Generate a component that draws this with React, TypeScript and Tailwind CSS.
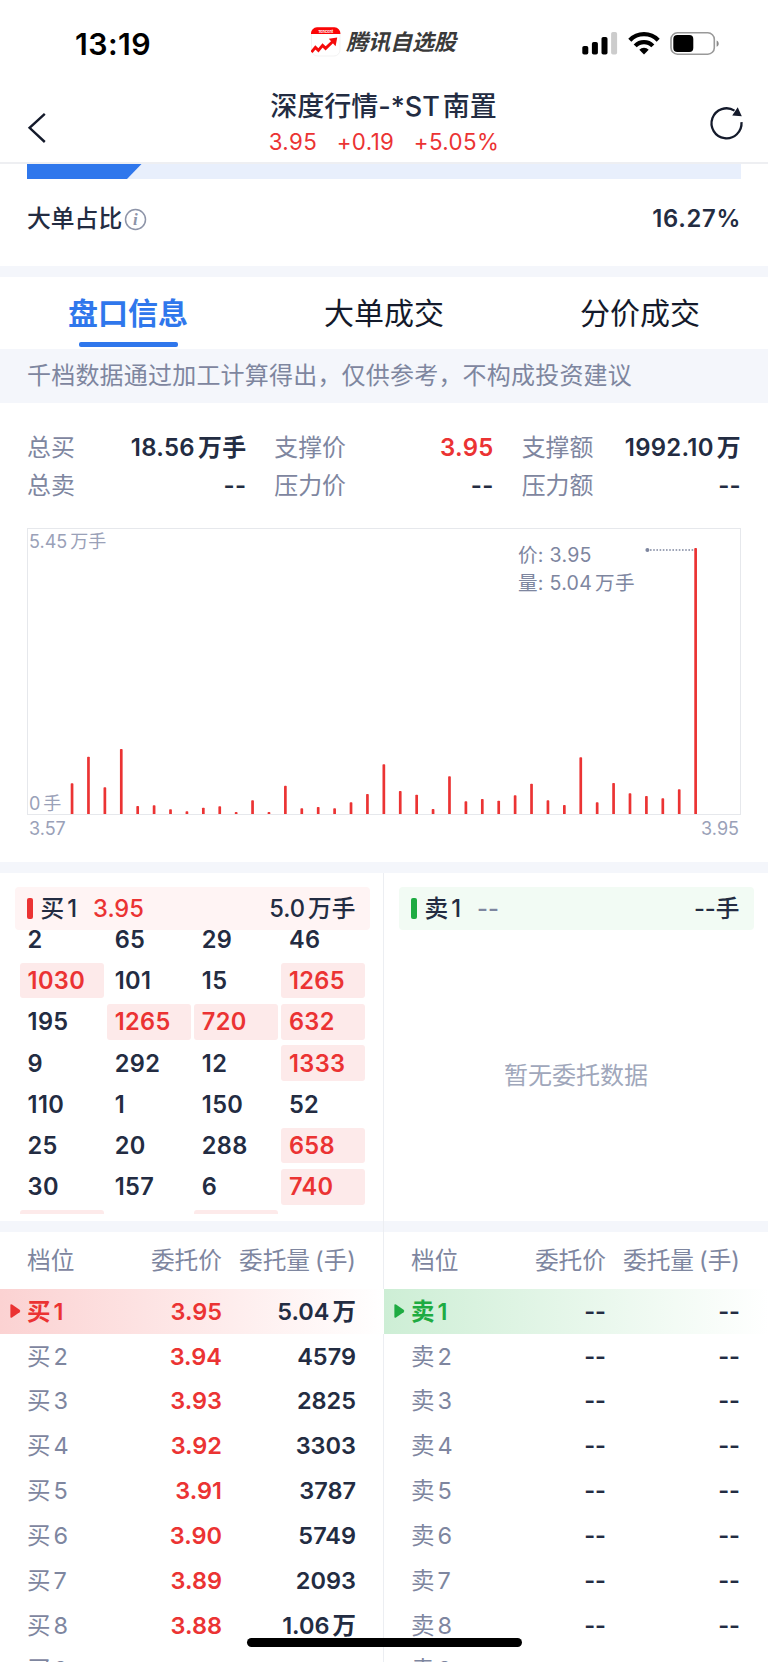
import clsx from "clsx";

type Cell = { value: number | null; big?: boolean };

type LevelRow = {
  level: number;
  price: string;
  volume: string;
};

const TABS = ["盘口信息", "大单成交", "分价成交"];

const STATS = [
  { label: "总买", value: "18.56万手" },
  { label: "支撑价", value: "3.95", up: true },
  { label: "支撑额", value: "1992.10万" },
  { label: "总卖", value: "--" },
  { label: "压力价", value: "--" },
  { label: "压力额", value: "--" },
];

// bar heights in px, one per price step from 3.57 to 3.95
const BARS = [
  30.7, 57.3, 26.7, 65, 8, 8.7, 4.7, 2.7, 6.3, 7.7, 2, 13.7, 2, 28.3, 5.7, 7, 5.7, 11.7, 20, 49.7,
  23, 19.3, 5, 37.7, 12.7, 15, 13.3, 18.7, 30.3, 13.7, 9, 56.7, 11.7, 31, 20.7, 18, 15.7, 24.7, 266,
];

const QUEUE: number[][] = [
  [2, 65, 29, 46],
  [1030, 101, 15, 1265],
  [195, 1265, 720, 632],
  [9, 292, 12, 1333],
  [110, 1, 150, 52],
  [25, 20, 288, 658],
  [30, 157, 6, 740],
];

const CELLS: Cell[] = [
  ...QUEUE.flat().map((value) => ({ value, big: value > 500 })),
  { value: null, big: true },
  { value: null },
  { value: null, big: true },
  { value: null },
];

const BUYS: LevelRow[] = [
  { level: 1, price: "3.95", volume: "5.04万" },
  { level: 2, price: "3.94", volume: "4579" },
  { level: 3, price: "3.93", volume: "2825" },
  { level: 4, price: "3.92", volume: "3303" },
  { level: 5, price: "3.91", volume: "3787" },
  { level: 6, price: "3.90", volume: "5749" },
  { level: 7, price: "3.89", volume: "2093" },
  { level: 8, price: "3.88", volume: "1.06万" },
  { level: 9, price: "", volume: "" },
];

const SELLS: LevelRow[] = BUYS.map(({ level }) => ({
  level,
  price: level < 9 ? "--" : "",
  volume: level < 9 ? "--" : "",
}));

// puts a hair of space wherever a CJK character meets a letter or digit
function Mixed({ text }: { text: string }) {
  const parts = text.split(/(?<=[\u4e00-\u9fff])(?=[\dA-Z])|(?<=[\dA-Z])(?=[\u4e00-\u9fff])/);
  return (
    <span className="inline-flex items-baseline gap-[3px] whitespace-pre">
      {parts.map((p, i) => (
        <span key={i}>{p}</span>
      ))}
    </span>
  );
}

function StatusBar() {
  return (
    <div className="flex h-[85px] items-start pt-[26px]">
      <div className="w-[311px] pl-[75px] text-[30.3px] leading-[36px] font-semibold tracking-[0.4px] text-black">13:19</div>
      <svg className="mt-px h-[30px] w-[30px]" viewBox="0 0 30 30">
        <rect x="0.5" y="0.5" width="28.5" height="28.5" rx="6" fill="#fff" stroke="#f3f3f3" />
        <path d="M0 7V6.5A6 6 0 0 1 6 0.3H23.4A6 6 0 0 1 29.4 6.5V7Z" fill="#fb0505" />
        <text x="14.7" y="5.6" fontSize="3.8" fontWeight="700" fill="#fff" textAnchor="middle">Tencent</text>
        <path d="M0.5 25.2L4.4 20.4L7.4 23.4L11.6 18.4L14.6 21.4L22.3 14" fill="none" stroke="#f50a0a" strokeWidth="2.9" />
        <path d="M17.8 11.8L26.2 10.4L24.6 19.2Z" fill="#f50a0a" />
      </svg>
      <span className="mt-px ml-[5px] text-[22px] leading-[30px] font-bold text-[#3a3a3a] italic">腾讯自选股</span>
      <div className="mt-[5px] ml-auto flex items-center pr-[48.5px]">
        <svg width="36" height="24" viewBox="0 0 36 24">
          <rect x="0.3" y="15" width="6" height="8.6" rx="1.8" />
          <rect x="9.9" y="11" width="6" height="12.6" rx="1.8" />
          <rect x="19.5" y="6" width="6" height="17.6" rx="1.8" />
          <rect x="29.1" y="1" width="6" height="22.6" rx="1.8" fill="#ccc" />
        </svg>
        <svg className="ml-[10px]" width="32" height="24" viewBox="0 0 32 24">
          <g fill="none" stroke="#000" strokeWidth="4.2">
            <path d="M1.8 9.3A19.6 19.6 0 0 1 30.2 9.3" />
            <path d="M7.2 14.9A12.2 12.2 0 0 1 24.8 14.9" />
          </g>
          <path d="M16 23.4L11.3 18.7A6.6 6.6 0 0 1 20.7 18.7Z" />
        </svg>
        <svg className="ml-[10px]" width="50" height="24" viewBox="0 0 50 24">
          <rect x="1" y="1.8" width="43.3" height="21.4" rx="6.5" fill="none" stroke="#999" strokeWidth="1.6" />
          <rect x="3.3" y="4" width="20" height="17" rx="4" />
          <path d="M46.6 9.4C49.4 10.6 49.4 14.6 46.6 15.8Z" fill="#888" />
        </svg>
      </div>
    </div>
  );
}

function TitleBar() {
  return (
    <div className="flex h-[79px] justify-between border-b-2 border-[#eeeff2]">
      <svg className="mt-[27px] ml-[27px]" width="20" height="32" viewBox="0 0 20 32" fill="none" stroke="#141a2b" strokeWidth="2.4">
        <path d="M17.8 1.8L2.6 15.8L17.8 30" />
      </svg>
      <div className="flex flex-col items-center pl-[12px]">
        <h1 className="mt-[4px] text-[27px] leading-[36px] font-medium text-[#232c42]">
          <Mixed text="深度行情-*ST南置" />
        </h1>
        <p className="mt-[3px] flex gap-[19.5px] pl-px text-[22.3px] leading-[28px] tracking-[0.4px] text-[#eb3333]">
          <span>3.95</span>
          <span>+0.19</span>
          <span>+5.05%</span>
        </p>
      </div>
      <svg className="mt-[20px] mr-[24px]" width="36" height="38" viewBox="0 0 36 38">
        <path d="M33.5 17.2A15 15 0 1 1 26.5 5.6" fill="none" stroke="#141a2b" strokeWidth="2.3" />
        <path d="M29.7 2.2L33.8 11.2L24.2 10.4Z" fill="#141a2b" />
      </svg>
    </div>
  );
}

function Chart() {
  return (
    <div className="mx-[27px] mt-[23px] h-[334px]">
      <div className="relative h-[287px] border border-[#e6e8ec]">
        <span className="absolute top-px left-px text-[18px] leading-[24px] text-[#9aa1b8]">
          <Mixed text="5.45万手" />
        </span>
        <span className="absolute -bottom-[2px] left-px text-[18px] leading-[24px] text-[#9aa1b8]">
          <Mixed text="0手" />
        </span>
        <div className="absolute top-[12px] left-[490px] text-[19.6px] leading-[28px] tracking-[0.25px] text-[#7e869f]">
          <p>价: 3.95</p>
          <p><Mixed text="量: 5.04万手" /></p>
        </div>
        <svg className="h-full w-full" viewBox="0 0 712 285">
          <circle cx="619.4" cy="21" r="2" fill="#7e869f" />
          <path d="M622 21H667" stroke="#7e869f" strokeWidth="1.4" strokeDasharray="1.6 1.6" />
          {BARS.map((h, i) => (
            <rect key={i} x={42.7 + i * 16.41} y={285 - h} width="2.7" height={h + 0.5} rx="0.8" fill="#eb3333" />
          ))}
        </svg>
      </div>
      <div className="flex justify-between px-[2px] pt-[2px] text-[18px] leading-[24px] text-[#9aa1b8]">
        <span>3.57</span>
        <span>3.95</span>
      </div>
    </div>
  );
}

function QueueHeader({ side, price, volume }: { side: "buy" | "sell"; price: string; volume: string }) {
  const buy = side === "buy";
  return (
    <div
      className={clsx(
        "mx-[14.5px] flex h-[43px] shrink-0 items-center rounded pr-[14px] pl-[12.5px] text-[23.7px] font-medium text-[#232c42]",
        buy ? "bg-[#fff4f4]" : "bg-[#f2fbf4]"
      )}
    >
      <span className={clsx("mr-[8px] h-[21px] w-[5.5px] rounded-[2px]", buy ? "bg-[#eb3333]" : "bg-[#1eab42]")} />
      <Mixed text={buy ? "买1" : "卖1"} />
      <span className={clsx("ml-[16px]", buy ? "text-[#eb3333]" : "text-[#7e869f]")}>{price}</span>
      <span className="ml-auto"><Mixed text={volume} /></span>
    </div>
  );
}

function LevelTable({ side, rows }: { side: "buy" | "sell"; rows: LevelRow[] }) {
  const buy = side === "buy";
  return (
    <div className="w-1/2">
      <div className="flex h-[57.5px] items-center pt-[2px] pr-[28px] pl-[27px] text-[23.7px] text-[#7e869f]">
        <span className="w-[85px]">档位</span>
        <span className="w-[110px] text-right">委托价</span>
        <span className="flex flex-1 justify-end gap-[5px]"><span>委托量</span><span>(手)</span></span>
      </div>
      {rows.map((row) => {
        const first = row.level === 1;
        return (
          <div
            key={row.level}
            className={clsx(
              "relative flex h-[44.83px] items-center pr-[28px] pl-[27px] text-[23.5px] font-semibold text-[#232c42]",
              first && buy && "bg-linear-to-r from-[#fbd2d2] to-white",
              first && !buy && "bg-linear-to-r from-[#cdeed5] to-white"
            )}
          >
            {first && (
              <svg className="absolute left-[10px]" width="11" height="14" viewBox="0 0 11 14" fill={buy ? "#eb3333" : "#1eab42"}>
                <path d="M0.4 0.8Q0.6 0 2 0.6L9.6 5.8Q11 7 9.6 8.2L2 13.4Q0.6 14 0.4 13.2Z" />
              </svg>
            )}
            <span
              className={clsx(
                "w-[85px]",
                first ? "font-semibold" : "font-normal text-[#7e869f]",
                first && (buy ? "text-[#eb3333]" : "text-[#1eab42]")
              )}
            >
              <Mixed text={`${buy ? "买" : "卖"}${row.level}`} />
            </span>
            <span className={clsx("w-[110px] text-right", buy && "text-[#eb3333]")}>{row.price}</span>
            <span className="flex-1 text-right"><Mixed text={row.volume} /></span>
          </div>
        );
      })}
    </div>
  );
}

export default function App() {
  return (
    <div className="relative h-[1662px] w-[768px] overflow-hidden bg-white font-['Inter','Noto_Sans_CJK_SC',sans-serif]">
      <StatusBar />
      <TitleBar />

      <section className="h-[102px] px-[27px]">
        <div className="h-[15px] bg-[#e8effc]">
          <div className="h-full w-[114.5px] bg-[#2f77ec] [clip-path:polygon(0_0,100%_0,100px_100%,0_100%)]" />
        </div>
        <div className="mt-[22px] flex h-[36px] items-center text-[23.8px] font-medium text-[#232c42]">
          <span>大单占比</span>
          <svg className="ml-[2px]" width="23" height="23" viewBox="0 0 23 23">
            <circle cx="11.5" cy="11.5" r="10" fill="none" stroke="#8d94a8" strokeWidth="1.5" />
            <text x="11.3" y="17.2" fontSize="17" fontStyle="italic" fontWeight="700" fontFamily="Liberation Serif" fill="#8d94a8" textAnchor="middle">i</text>
          </svg>
          <span className="ml-auto font-semibold tracking-[0.7px]">16.27%</span>
        </div>
      </section>
      <div className="h-[11px] bg-[#f4f6fb]" />

      <nav className="flex h-[72px]">
        {TABS.map((tab, i) => (
          <button
            key={tab}
            className={clsx(
              "relative flex flex-1 justify-center pt-[14px] text-[30px] leading-[44px]",
              i === 0 ? "font-semibold text-[#2f77ec]" : "text-[#141a2b]"
            )}
          >
            {tab}
            {i === 0 && <span className="absolute bottom-[2px] h-[5.5px] w-[99px] rounded-[2px] bg-[#2f77ec]" />}
          </button>
        ))}
      </nav>
      <p className="flex h-[54px] items-center bg-[#f4f6fb] px-[27px] text-[24px] tracking-[0.2px] text-[#7e869f]">
        千档数据通过加工计算得出，仅供参考，不构成投资建议
      </p>

      <div className="mt-[26px] grid grid-cols-3 gap-x-[28px] px-[27px]">
        {STATS.map((s) => (
          <div key={s.label} className="flex h-[38px] items-center justify-between text-[23.9px]">
            <span className="text-[#7e869f]">{s.label}</span>
            <span className={clsx("font-semibold tracking-[0.3px]", s.up ? "text-[#eb3333]" : "text-[#232c42]")}>
              <Mixed text={s.value} />
            </span>
          </div>
        ))}
      </div>

      <Chart />

      <div className="h-[11px] bg-[#f4f6fb]" />
      <div className="flex h-[348px]">
        <div className="flex w-1/2 flex-col pt-[14px]">
          <QueueHeader side="buy" price="3.95" volume="5.0万手" />
          <div className="-mt-[8.5px] h-[292px] shrink-0 overflow-hidden pl-[20px]">
            <div className="grid w-[345px] grid-cols-4 gap-x-[3.5px] gap-y-[5.75px]">
              {CELLS.map((c, i) => (
                <div
                  key={i}
                  className={clsx(
                    "flex h-[35.5px] items-center rounded-[3px] pt-px pl-[7.5px] text-[23.6px] leading-[28px] font-semibold tracking-[0.4px]",
                    c.big ? "bg-[#fdeaea] text-[#eb3333]" : "text-[#232c42]"
                  )}
                >
                  {c.value}
                </div>
              ))}
            </div>
          </div>
        </div>
        <div className="-ml-px w-px bg-[#eceef2]" />
        <div className="flex w-1/2 flex-col pt-[14px]">
          <QueueHeader side="sell" price="--" volume="--手" />
          <div className="flex h-[292px] items-center justify-center text-[24px] text-[#a0a7bb]">暂无委托数据</div>
        </div>
      </div>

      <div className="flex h-[10.5px] bg-[#f4f6fb]">
        <div className="w-1/2 border-r border-[#eceef2]" />
      </div>
      <div className="flex">
        <LevelTable side="buy" rows={BUYS} />
        <div className="-ml-px w-px bg-[#eceef2]" />
        <LevelTable side="sell" rows={SELLS} />
      </div>

      <div className="absolute top-[1638px] left-[247px] h-[9.3px] w-[274.5px] rounded-full bg-black" />
    </div>
  );
}
